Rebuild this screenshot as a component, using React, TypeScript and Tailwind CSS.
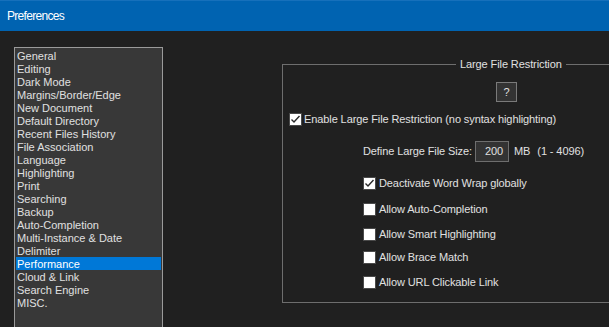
const ITEMS = [
  "General",
  "Editing",
  "Dark Mode",
  "Margins/Border/Edge",
  "New Document",
  "Default Directory",
  "Recent Files History",
  "File Association",
  "Language",
  "Highlighting",
  "Print",
  "Searching",
  "Backup",
  "Auto-Completion",
  "Multi-Instance & Date",
  "Delimiter",
  "Performance",
  "Cloud & Link",
  "Search Engine",
  "MISC.",
];

const SELECTED = "Performance";

const OPTIONS: { label: string; checked: boolean; mt: string }[] = [
  { label: "Deactivate Word Wrap globally", checked: true, mt: "mt-[15px]" },
  { label: "Allow Auto-Completion", checked: false, mt: "mt-[13px]" },
  { label: "Allow Smart Highlighting", checked: false, mt: "mt-[12px]" },
  { label: "Allow Brace Match", checked: false, mt: "mt-[10px]" },
  { label: "Allow URL Clickable Link", checked: false, mt: "mt-[12px]" },
];

function CheckBox({ checked }: { checked: boolean }) {
  return (
    <span className="flex h-[13px] w-[13px] shrink-0 items-center justify-center border border-[#4a4a4a] bg-white">
      {checked && (
        <svg width="11" height="11" viewBox="0 0 11 11">
          <polyline points="1.5,5.5 4,8 9.5,2" fill="none" stroke="#2a2a2a" strokeWidth="1.4" />
        </svg>
      )}
    </span>
  );
}

export default function App() {
  return (
    <div
      className="flex h-[327px] w-[609px] flex-col overflow-hidden bg-[#202020] text-[11px] text-[#e0e0e0]"
      style={{ fontFamily: '"Liberation Sans", Arial, sans-serif' }}
    >
      <div className="flex h-[31px] shrink-0 items-center border-t border-[#1670bb] bg-[#0063b1] pl-[7px] text-[12px] tracking-[-0.7px] text-white">
        Preferences
      </div>

      <div className="flex flex-1 items-start">
        {/* category list */}
        <div className="ml-[14px] mt-[16px] h-[300px] w-[149px] shrink-0 border border-[#9a9a9a] bg-[#383838] p-[1px]">
          {ITEMS.map((item) => (
            <div
              key={item}
              className={
                "h-[13px] whitespace-nowrap pl-[1px] leading-[15px] " +
                (item === SELECTED ? "bg-[#0078d7] text-white" : "")
              }
            >
              {item}
            </div>
          ))}
        </div>

        {/* group box */}
        <div className="relative ml-[119px] mt-[33px] h-[239px] w-[400px] shrink-0 border border-[#6e6e6e] tracking-[-0.1px]">
          <span className="absolute left-[173px] top-[-8px] bg-[#202020] px-[4px] leading-[14px]">
            Large File Restriction
          </span>

          <div className="flex flex-col items-start">
            <button className="ml-[213px] mt-[17px] flex h-[20px] w-[21px] items-center justify-center border border-[#7a7a7a] bg-[#333333] text-[11px] text-[#e0e0e0]">
              ?
            </button>

            <label className="ml-[6px] mt-[11px] flex h-[13px] items-center gap-[2px] whitespace-nowrap">
              <CheckBox checked />
              <span>Enable Large File Restriction (no syntax highlighting)</span>
            </label>

            <div className="ml-[80px] mt-[15px] flex h-[21px] items-center whitespace-nowrap">
              <span className="w-[108px] text-right">Define Large File Size:</span>
              <span className="ml-[4px] flex h-[21px] w-[34px] items-center justify-end border border-[#6e6e6e] bg-[#333333] pr-[5px]">
                200
              </span>
              <span className="ml-[5px]">MB</span>
              <span className="ml-[7px]">(1 - 4096)</span>
            </div>

            {OPTIONS.map((o) => (
              <label
                key={o.label}
                className={"ml-[80px] flex h-[13px] items-center gap-[3px] whitespace-nowrap " + o.mt}
              >
                <CheckBox checked={o.checked} />
                <span>{o.label}</span>
              </label>
            ))}
          </div>
        </div>
      </div>
    </div>
  );
}
